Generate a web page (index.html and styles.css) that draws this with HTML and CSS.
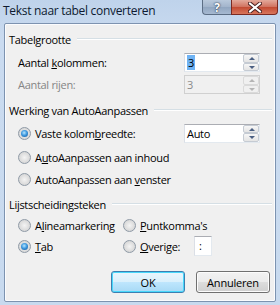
FILE: index.html
```html
<!DOCTYPE html>
<html>
<head>
    <meta charset="UTF-8">
    <title>Tekst naar tabel converteren</title>
    <link rel="stylesheet" href="styles.css">
</head>
<body>
    <div class="window">
        <div class="titlebar">
            <span class="title">Tekst naar tabel converteren</span>
            <div class="captionbtns">
                <div class="cbtn help">?</div>
                <div class="cbtn close">
                    <svg width="14" height="11" viewBox="0 0 14 11">
                        <path d="M2 1.5 L12 9.5 M12 1.5 L2 9.5" stroke="#4a2020" stroke-width="4" stroke-linecap="square"/>
                        <path d="M2 1.5 L12 9.5 M12 1.5 L2 9.5" stroke="#ffffff" stroke-width="2" stroke-linecap="square"/>
                    </svg>
                </div>
            </div>
        </div>

        <div class="client">
            <div class="group-header"><span>Tabelgrootte</span><i></i></div>
            <div class="row r-kol">
                <label class="lbl"><span>Aantal <u>k</u>olommen:</span></label>
                <div class="spin">
                    <div class="spin-text"><span class="sel">3</span></div>
                    <div class="spin-btns"><b class="up"></b><b class="down"></b></div>
                </div>
            </div>
            <div class="row r-rij">
                <label class="lbl disabled"><span>Aantal rijen:</span></label>
                <div class="spin disabled">
                    <div class="spin-text">3</div>
                    <div class="spin-btns"><b class="up"></b><b class="down"></b></div>
                </div>
            </div>

            <div class="group-header g2"><span>Werking van AutoAanpassen</span><i></i></div>
            <div class="row r-vaste">
                <label class="lbl"><span class="radio checked"></span><span>Vaste kolom<u>b</u>reedte:</span></label>
                <div class="spin">
                    <div class="spin-text">Auto</div>
                    <div class="spin-btns"><b class="up"></b><b class="down"></b></div>
                </div>
            </div>
            <div class="row r-inhoud">
                <label class="lbl wide"><span class="radio"></span><span>A<u>u</u>toAanpassen aan inhoud</span></label>
            </div>
            <div class="row r-venster">
                <label class="lbl wide"><span class="radio"></span><span>AutoAanpassen aan <u>v</u>enster</span></label>
            </div>

            <div class="group-header g3"><span>Lijstscheidingsteken</span><i></i></div>
            <div class="row r-alinea">
                <label class="lbl col1"><span class="radio"></span><span>A<u>l</u>ineamarkering</span></label>
                <label class="lbl"><span class="radio"></span><span><u>P</u>untkomma's</span></label>
            </div>
            <div class="row r-tab">
                <label class="lbl col1"><span class="radio checked"></span><span><u>T</u>ab</span></label>
                <label class="lbl col2"><span class="radio"></span><span><u>O</u>verige:</span></label>
                <div class="small-input">:</div>
            </div>

            <div class="buttons">
                <button class="btn default">OK</button>
                <button class="btn">Annuleren</button>
            </div>
        </div>
    </div>
</body>
</html>
```

FILE: styles.css
```css
body { margin: 0; font-family: "Open Sans", "Noto Sans", sans-serif; font-size: 11px; letter-spacing: -0.3px; color: #000; }
.window { width: 280px; height: 305px; box-sizing: border-box; padding: 0 4px 3px 4px; background: linear-gradient(to bottom, #bfd3eb, #cadbf0 40px, #c8daef); display: flex; flex-direction: column; }

.titlebar { height: 23px; display: flex; align-items: flex-start; position: relative; }
.title { margin: 2px 0 0 -1px; font-size: 12px; color: #0d1a30; letter-spacing: -0.3px; }
.captionbtns { position: absolute; right: -2px; top: 0; display: flex; }
.cbtn { height: 15px; box-sizing: border-box; border: 1px solid #5c6e85; border-top: none; display: flex; align-items: center; justify-content: center; }
.help { width: 29px; border-radius: 0 0 0 4px; border-right: none; background: linear-gradient(to bottom, #b9c9dc, #a2b4cb 50%, #91a6c0 51%, #a6b9d1); color: #fff; font-weight: bold; font-size: 12px; text-shadow: 0 0 2px #2a3a50, 0 0 1px #2a3a50; }
.close { width: 47px; border-radius: 0 0 4px 0; border-color: #7a2a22; background: linear-gradient(to bottom, #e3a99b, #d0715e 50%, #c24a32 51%, #d8765c); }

.client { flex: 1; border: 1px solid #7d93b0; border-radius: 2px; background: #f0f0f0; box-shadow: inset 0 0 0 1px #fbfcfe; padding: 7px 0 0 0; }

.group-header { height: 16px; display: flex; align-items: center; padding: 0 3px 0 4px; }
.group-header i { flex: 1; height: 1px; background: #d5dfe5; border-bottom: 1px solid #fff; margin-left: 6px; }
.g2 { margin-top: 8px; }
.g3 { margin-top: 9px; }

.row { display: flex; align-items: center; padding-left: 13px; }
.r-kol { margin-top: 6px; height: 19px; }
.r-rij { margin-top: 3px; height: 19px; }
.r-vaste { margin-top: 5px; height: 20px; }
.r-inhoud { margin-top: 6px; height: 16px; }
.r-venster { margin-top: 6px; height: 16px; }
.r-alinea { margin-top: 5px; height: 16px; }
.r-tab { margin-top: 3px; height: 20px; }

.lbl { display: flex; align-items: center; width: 166px; flex: none; white-space: nowrap; }
.lbl.wide { width: auto; }
.lbl.disabled { color: #858585; }
.col1 { width: 105px; }
.col2 { width: 71px; }

.radio { width: 13px; height: 13px; box-sizing: border-box; border-radius: 50%; border: 1px solid #8f9aa6; background: radial-gradient(circle at 50% 50%, #f4f4f4 0, #dcdcdc 60%, #c9cccf 100%); margin-right: 4px; position: relative; flex: none; }
.radio.checked::after { content: ""; position: absolute; left: 2px; top: 2px; width: 7px; height: 7px; border-radius: 50%; background: radial-gradient(circle at 45% 40%, #b8e6ff 0, #3f9ae0 45%, #0d4e94 100%); }

.spin { width: 76px; height: 19px; flex: none; box-sizing: border-box; border: 1px solid #abadb3; border-left-color: #dbdfe6; border-right-color: #e3e9ef; border-bottom-color: #e3e9ef; background: #fff; display: flex; }
.spin-text { flex: 1; padding-left: 2px; line-height: 17px; }
.sel { background: #6fb3f4; padding: 0 1px; }
.spin-btns { width: 16px; display: flex; flex-direction: column; }
.spin-btns b { flex: 1; box-sizing: border-box; border: 1px solid #c5cbd3; border-radius: 2px; background: linear-gradient(to bottom, #f7f7f7, #e4e4e4); position: relative; }
.spin-btns b::after { content: ""; position: absolute; left: 5px; border-left: 3px solid transparent; border-right: 3px solid transparent; }
.spin-btns .up::after { top: 2px; border-bottom: 3px solid #4a5f82; }
.spin-btns .down::after { top: 2px; border-top: 3px solid #4a5f82; }
.spin.disabled { background: #f0f0f0; border-color: #d0d0d0; color: #8a8a8a; }
.spin.disabled .spin-btns b { border-color: #dadada; background: #f0f0f0; }
.spin.disabled .spin-btns .up::after { border-bottom-color: #b5b5b5; }
.spin.disabled .spin-btns .down::after { border-top-color: #b5b5b5; }

.small-input { width: 18px; height: 20px; flex: none; box-sizing: border-box; border: 1px solid #abadb3; border-left-color: #dbdfe6; border-right-color: #e3e9ef; border-bottom-color: #e3e9ef; background: #fff; padding-left: 4px; line-height: 18px; }

.buttons { display: flex; justify-content: flex-end; gap: 11px; margin-top: 15px; padding-right: 5px; }
.btn { flex: none; width: 74px; min-width: 74px; height: 22px; box-sizing: border-box; border: 1px solid #707070; border-radius: 3px; font-family: inherit; font-size: 11px; letter-spacing: -0.2px; color: #000; padding: 0; background: linear-gradient(to bottom, #f2f2f2, #ebebeb 50%, #dddddd 51%, #cfcfcf); box-shadow: inset 0 0 0 1px #fcfcfc; }
.btn.default { border-color: #3c7fb1; background: linear-gradient(to bottom, #eaf6fd, #d9f0fc 50%, #bee6fd 51%, #a7d9f5); box-shadow: inset 0 0 0 1px #48d8fb; }
```
